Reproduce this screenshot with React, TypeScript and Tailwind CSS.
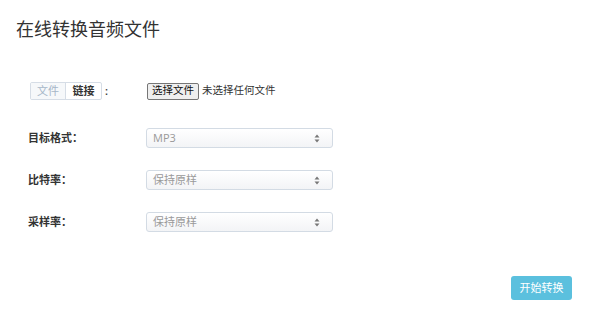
const Arrows = () => (
  <svg width="6" height="9" viewBox="0 0 6 9" className="fill-[#777]">
    <path d="M3 0.5 L5.5 3.5 L0.5 3.5 Z" />
    <path d="M3 8.5 L5.5 5.5 L0.5 5.5 Z" />
  </svg>
)

const FakeSelect = ({ value }: { value: string }) => (
  <div className="flex h-[20px] w-[187px] items-center justify-between rounded-[3px] border border-[#d3dbe4] bg-gradient-to-b from-white to-[#f3f4f6] pl-[6px] pr-[12px] text-[11px] text-[#999]">
    <span>{value}</span>
    <Arrows />
  </div>
)

const Row = ({ label, children }: { label: string; children: React.ReactNode }) => (
  <div className="flex h-[20px] items-center">
    <span className="w-[118px] text-[11px] font-semibold text-[#333]">{label}</span>
    {children}
  </div>
)

export default function App() {
  return (
    <div className="flex h-[309px] w-[600px] flex-col bg-white font-['Open_Sans','Noto_Sans_CJK_SC',sans-serif]">
      <h1 className="pl-[16px] pt-[17px] text-[18px] leading-[24px] text-[#333]">在线转换音频文件</h1>

      <div className="mt-[41px] flex flex-col pl-[28px]">
        <div className="flex h-[18px] items-center">
          <div className="ml-[2px] flex h-[18px] w-[72px] overflow-hidden rounded-[2px] border border-[#d6dde6] text-[11px]">
            <span className="flex w-[35px] items-center justify-center border-r border-[#d6dde6] bg-[#f6f8fa] text-[#a6b6c8]">文件</span>
            <span className="flex flex-1 items-center justify-center font-semibold text-[#333]">链接</span>
          </div>
          <span className="ml-[3px] w-[42px] text-[11px] font-semibold text-[#333]">:</span>
          <div className="flex h-[17px] items-center rounded-[2px] border border-[#767676] bg-[#efefef] px-[4px] text-[10.5px] text-[#111]">选择文件</div>
          <span className="ml-[3px] text-[10.5px] text-[#333]">未选择任何文件</span>
        </div>

        <div className="mt-[28px] flex flex-col gap-[22px]">
          <Row label="目标格式：">
            <FakeSelect value="MP3" />
          </Row>
          <Row label="比特率：">
            <FakeSelect value="保持原样" />
          </Row>
          <Row label="采样率：">
            <FakeSelect value="保持原样" />
          </Row>
        </div>
      </div>

      <button className="mr-[28px] mt-[44px] h-[24px] w-[61px] self-end rounded-[3px] bg-[#5bc0de] text-[11px] text-white">开始转换</button>
    </div>
  )
}
